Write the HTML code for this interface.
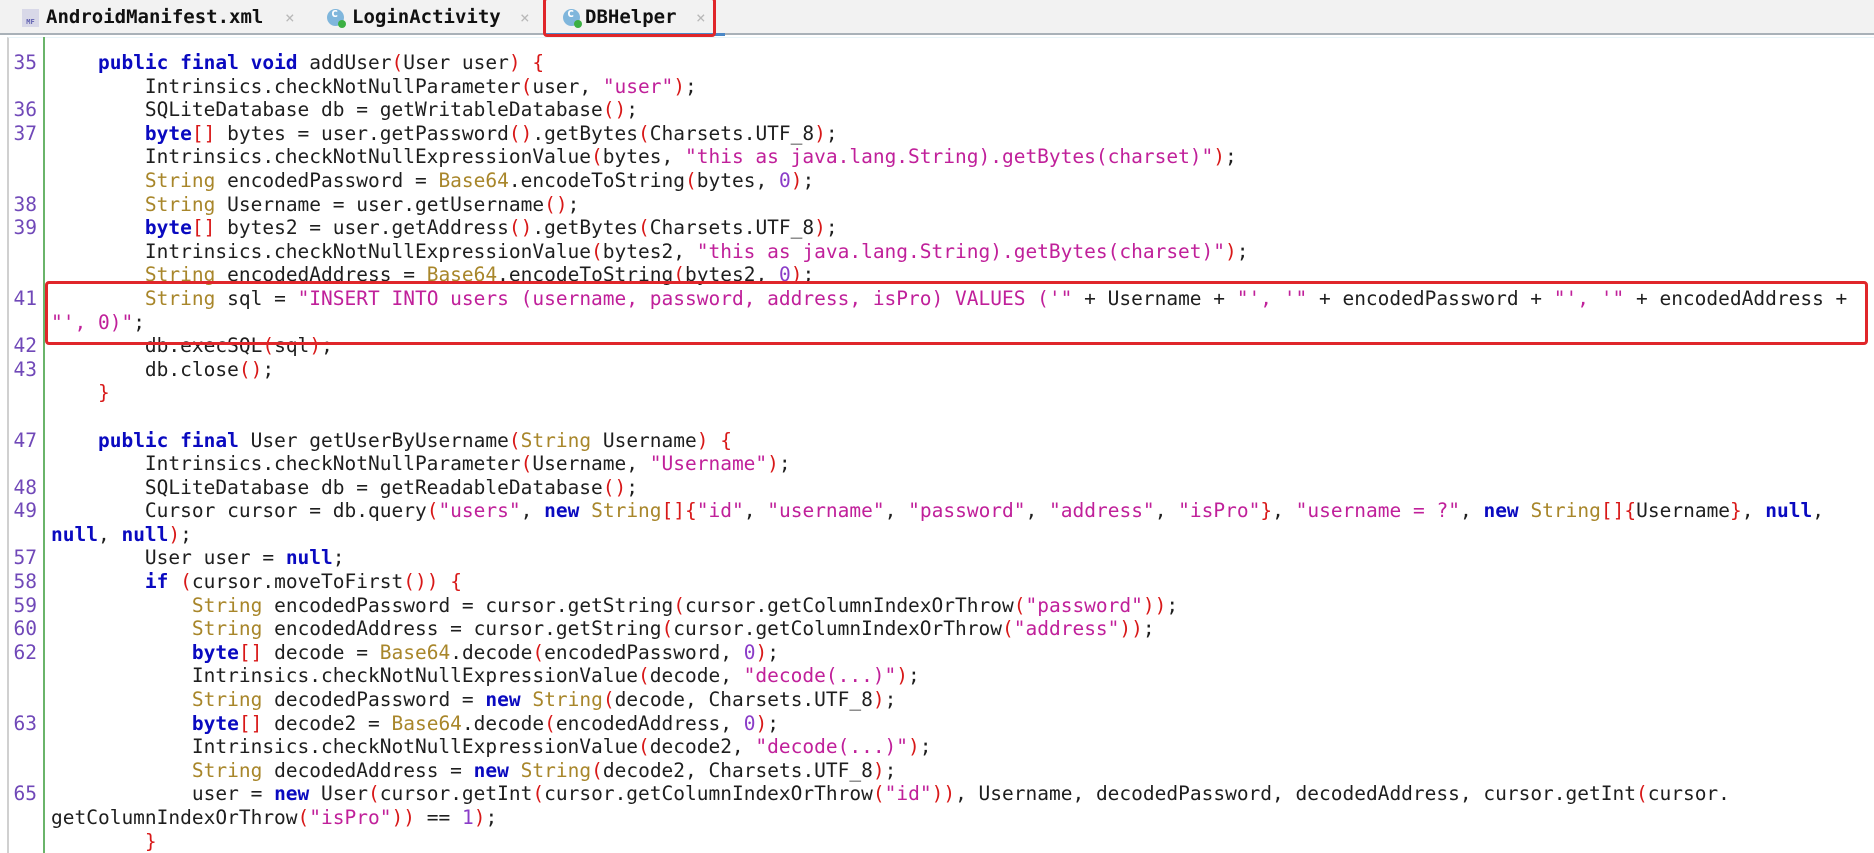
<!DOCTYPE html>
<html><head><meta charset="utf-8">
<style>
*{margin:0;padding:0;box-sizing:border-box}
html,body{width:1874px;height:853px;overflow:hidden;background:#fff}
body{position:relative;font-family:"DejaVu Sans Mono","Liberation Mono",monospace}
#tabs{position:absolute;left:0;top:0;width:1874px;height:35px;background:#f2f2f2;border-bottom:2px solid #a9b1b8}
.tab{position:absolute;top:6px;font-size:19px;font-weight:bold;color:#111;white-space:nowrap}
.x{position:absolute;top:8px;font-size:16px;color:#b8b8b8}
.ic{position:absolute;top:9px;width:17px;height:17px;border-radius:50%;background:#7fb6dc}
.ic::after{content:"";position:absolute;right:-2px;bottom:-2px;width:8px;height:8px;border-radius:50%;background:#3cb043}
.ic::before{content:"c";position:absolute;left:4px;top:-3px;font-size:12px;color:#fff;font-weight:bold}
#editor{position:absolute;left:7px;top:37px;width:1867px;height:816px;border-left:2px solid #d0d0d0;border-top:1px solid #e8f4f8}
#green{position:absolute;left:43px;top:37px;width:2px;height:816px;background:#6ab46a}
#gut,#code{position:absolute;top:51px;font-size:19.5px;line-height:23.6px;white-space:pre}
#gut{left:0;width:37px;text-align:right;color:#7048b8}
#code{left:51px;color:#1e1e1e}
.k{color:#0a0ac0;font-weight:bold}
.s{color:#c0209a}
.t{color:#a8862a}
.p{color:#d81818}
.n{color:#8a3cc8}
.box{position:absolute;border:3px solid #e0262a;border-radius:4px}
</style></head><body>
<div id="tabs">
  <div style="position:absolute;left:22px;top:9px;width:17px;height:18px;background:#d8d8e8;font-size:7px;color:#6060b0;font-weight:bold;line-height:26px;text-align:center">MF</div>
  <div class="tab" style="left:46px">AndroidManifest.xml</div>
  <div class="x" style="left:285px">×</div>
  <div class="ic" style="left:327px"></div>
  <div class="tab" style="left:352px">LoginActivity</div>
  <div class="x" style="left:520px">×</div>
  <div class="ic" style="left:563px"></div>
  <div class="tab" style="left:585px">DBHelper</div>
  <div class="x" style="left:696px">×</div>
  <div style="position:absolute;left:545px;top:33px;width:180px;height:3px;background:#4a88c7"></div>
</div>
<div id="editor"></div>
<div id="green"></div>
<div id="gut">35

36
37


38
39


41

42
43


47

48
49

57
58
59
60
62


63


65

</div>
<div id="code">    <span class="k">public final void</span> addUser<span class="p">(</span>User user<span class="p">)</span> <span class="p">{</span>
        Intrinsics.checkNotNullParameter<span class="p">(</span>user, <span class="s">"user"</span><span class="p">)</span>;
        SQLiteDatabase db = getWritableDatabase<span class="p">()</span>;
        <span class="k">byte</span><span class="p">[]</span> bytes = user.getPassword<span class="p">()</span>.getBytes<span class="p">(</span>Charsets.UTF_8<span class="p">)</span>;
        Intrinsics.checkNotNullExpressionValue<span class="p">(</span>bytes, <span class="s">"this as java.lang.String).getBytes(charset)"</span><span class="p">)</span>;
        <span class="t">String</span> encodedPassword = <span class="t">Base64</span>.encodeToString<span class="p">(</span>bytes, <span class="n">0</span><span class="p">)</span>;
        <span class="t">String</span> Username = user.getUsername<span class="p">()</span>;
        <span class="k">byte</span><span class="p">[]</span> bytes2 = user.getAddress<span class="p">()</span>.getBytes<span class="p">(</span>Charsets.UTF_8<span class="p">)</span>;
        Intrinsics.checkNotNullExpressionValue<span class="p">(</span>bytes2, <span class="s">"this as java.lang.String).getBytes(charset)"</span><span class="p">)</span>;
        <span class="t">String</span> encodedAddress = <span class="t">Base64</span>.encodeToString<span class="p">(</span>bytes2, <span class="n">0</span><span class="p">)</span>;
        <span class="t">String</span> sql = <span class="s">"INSERT INTO users (username, password, address, isPro) VALUES ('"</span> + Username + <span class="s">"', '"</span> + encodedPassword + <span class="s">"', '"</span> + encodedAddress +
<span class="s">"', 0)"</span>;
        db.execSQL<span class="p">(</span>sql<span class="p">)</span>;
        db.close<span class="p">()</span>;
    <span class="p">}</span>

    <span class="k">public final</span> User getUserByUsername<span class="p">(</span><span class="t">String</span> Username<span class="p">)</span> <span class="p">{</span>
        Intrinsics.checkNotNullParameter<span class="p">(</span>Username, <span class="s">"Username"</span><span class="p">)</span>;
        SQLiteDatabase db = getReadableDatabase<span class="p">()</span>;
        Cursor cursor = db.query<span class="p">(</span><span class="s">"users"</span>, <span class="k">new</span> <span class="t">String</span><span class="p">[]{</span><span class="s">"id"</span>, <span class="s">"username"</span>, <span class="s">"password"</span>, <span class="s">"address"</span>, <span class="s">"isPro"</span><span class="p">}</span>, <span class="s">"username = ?"</span>, <span class="k">new</span> <span class="t">String</span><span class="p">[]{</span>Username<span class="p">}</span>, <span class="k">null</span>,
<span class="k">null</span>, <span class="k">null</span><span class="p">)</span>;
        User user = <span class="k">null</span>;
        <span class="k">if</span> <span class="p">(</span>cursor.moveToFirst<span class="p">())</span> <span class="p">{</span>
            <span class="t">String</span> encodedPassword = cursor.getString<span class="p">(</span>cursor.getColumnIndexOrThrow<span class="p">(</span><span class="s">"password"</span><span class="p">))</span>;
            <span class="t">String</span> encodedAddress = cursor.getString<span class="p">(</span>cursor.getColumnIndexOrThrow<span class="p">(</span><span class="s">"address"</span><span class="p">))</span>;
            <span class="k">byte</span><span class="p">[]</span> decode = <span class="t">Base64</span>.decode<span class="p">(</span>encodedPassword, <span class="n">0</span><span class="p">)</span>;
            Intrinsics.checkNotNullExpressionValue<span class="p">(</span>decode, <span class="s">"decode(...)"</span><span class="p">)</span>;
            <span class="t">String</span> decodedPassword = <span class="k">new</span> <span class="t">String</span><span class="p">(</span>decode, Charsets.UTF_8<span class="p">)</span>;
            <span class="k">byte</span><span class="p">[]</span> decode2 = <span class="t">Base64</span>.decode<span class="p">(</span>encodedAddress, <span class="n">0</span><span class="p">)</span>;
            Intrinsics.checkNotNullExpressionValue<span class="p">(</span>decode2, <span class="s">"decode(...)"</span><span class="p">)</span>;
            <span class="t">String</span> decodedAddress = <span class="k">new</span> <span class="t">String</span><span class="p">(</span>decode2, Charsets.UTF_8<span class="p">)</span>;
            user = <span class="k">new</span> User<span class="p">(</span>cursor.getInt<span class="p">(</span>cursor.getColumnIndexOrThrow<span class="p">(</span><span class="s">"id"</span><span class="p">))</span>, Username, decodedPassword, decodedAddress, cursor.getInt<span class="p">(</span>cursor.
getColumnIndexOrThrow<span class="p">(</span><span class="s">"isPro"</span><span class="p">))</span> == <span class="n">1</span><span class="p">)</span>;
        <span class="p">}</span></div>
<div class="box" style="left:543px;top:-3px;width:173px;height:40px"></div>
<div class="box" style="left:45px;top:281px;width:1823px;height:64px"></div>
</body></html>
